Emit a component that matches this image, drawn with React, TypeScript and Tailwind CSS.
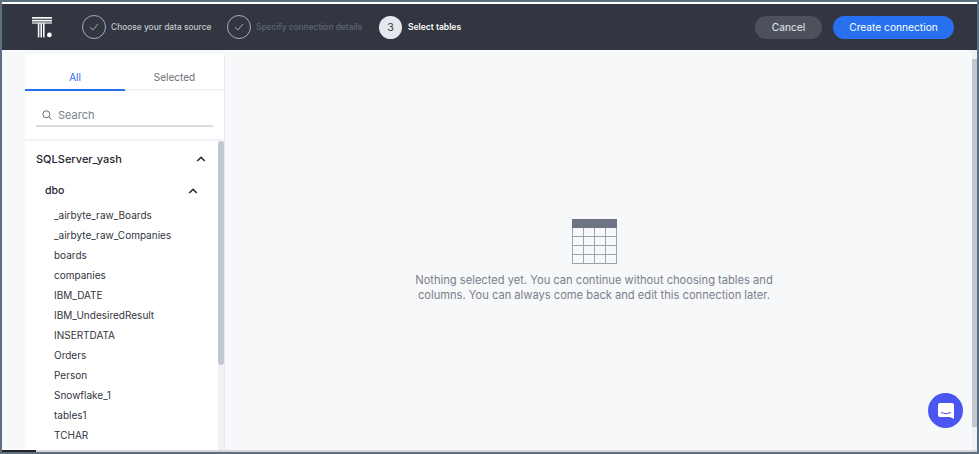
import React from "react";

function Check() {
  return (
    <span className="w-[24px] h-[24px] rounded-full border border-[#a9adb5] flex items-center justify-center shrink-0">
      <svg width="10" height="8" viewBox="0 0 10 8" fill="none" stroke="#a9adb5" strokeWidth="1">
        <path d="M1 4.2 L3.8 7 L9 1" />
      </svg>
    </span>
  );
}

function Chevron() {
  return (
    <svg width="10" height="6" viewBox="0 0 10 6" fill="none" stroke="#2a2f3a" strokeWidth="1.6">
      <path d="M1.2 5 L5 1.4 L8.8 5" />
    </svg>
  );
}

const tables = [
  "_airbyte_raw_Boards",
  "_airbyte_raw_Companies",
  "boards",
  "companies",
  "IBM_DATE",
  "IBM_UndesiredResult",
  "INSERTDATA",
  "Orders",
  "Person",
  "Snowflake_1",
  "tables1",
  "TCHAR",
];

export default function App() {
  return (
    <div className="w-[979px] h-[454px] overflow-hidden bg-[#5d6f80] pt-[2px] px-[2px] font-['Inter','Liberation_Sans',sans-serif] relative">
      <div className="h-[2px] bg-white" />
      <div className="h-[446px] flex flex-col bg-[#f6f8fa]">
        <header className="h-[46px] bg-[#323640] flex items-center shrink-0 pl-[30px] pr-[23px]">
          <svg width="21" height="21" viewBox="0 0 21 21" className="shrink-0 mr-[29px]">
            <rect x="0" y="0" width="20" height="1.7" fill="#f4f5f6" />
            <rect x="0" y="2.8" width="20" height="1.7" fill="#f4f5f6" />
            <rect x="0" y="5.4" width="20" height="1.2" fill="#f4f5f6" />
            <rect x="5.8" y="6" width="1.6" height="14.4" fill="#f4f5f6" />
            <rect x="8.4" y="6" width="1.6" height="14.4" fill="#f4f5f6" />
            <rect x="11" y="6" width="1.6" height="14.4" fill="#f4f5f6" />
            <circle cx="17.4" cy="17.9" r="2.4" fill="#ffffff" />
          </svg>
          <Check />
          <span className="ml-[5px] pt-[1px] text-[8.4px] font-medium text-[#c4c7cc] w-[116px] whitespace-nowrap">Choose your data source</span>
          <Check />
          <span className="ml-[5px] pt-[1px] text-[8.4px] font-medium text-[#5f6675] w-[123px] whitespace-nowrap">Specify connection details</span>
          <span className="w-[23px] h-[23px] pt-[2px] rounded-full bg-[#e6e8ed] text-[#323640] text-[10.5px] flex items-center justify-center shrink-0">3</span>
          <span className="ml-[6px] pt-[1px] text-[8.5px] font-semibold text-white whitespace-nowrap">Select tables</span>
          <button className="ml-auto w-[67px] h-[23px] pt-[2px] rounded-full bg-[#4d515c] text-[#e8e9ec] text-[10.2px] flex items-center justify-center">Cancel</button>
          <button className="ml-[11px] w-[121px] h-[23px] pt-[2px] rounded-full bg-[#2770ef] text-white text-[10.2px] flex items-center justify-center">Create connection</button>
        </header>
        <div className="flex flex-1 min-h-0">
          <aside className="ml-[23px] w-[200px] mt-[4px] flex flex-col bg-[#f1f2f5] border-r border-[#e8eaef] rounded-t-[3px] shrink-0">
            <div className="bg-white rounded-t-[3px] h-[85px] shrink-0 flex flex-col">
              <div className="flex h-[37px] border-b-2 border-[#f1f2f5] shrink-0">
                <div className="w-[100px] h-[37px] pt-[12px] border-b-2 border-[#2770ef] text-[#2770ef] text-[10px] flex items-center justify-center">All</div>
                <div className="flex-1 h-[35px] pt-[12px] text-[#6b6f78] text-[10px] flex items-center justify-center">Selected</div>
              </div>
              <div className="mx-[11px] mt-[12px] h-[24px] pt-[3px] border-b-2 border-[#d9dbe0] flex items-center pl-[6px] gap-[6px]">
                <svg width="10" height="10" viewBox="0 0 10 10" fill="none" stroke="#6b6f78" strokeWidth="1" className="-mt-[1px]">
                  <circle cx="4.3" cy="4.3" r="3.5" />
                  <path d="M6.9 6.9 L9.5 9.5" />
                </svg>
                <span className="text-[11px] text-[#7b7f88]">Search</span>
              </div>
            </div>
            <div className="mt-[2px] flex-1 min-h-0 bg-white flex overflow-hidden">
              <div className="flex-1 min-w-0 pl-[11px] pr-[11px]">
                <div className="h-[34px] mt-[1px] flex items-center justify-between pr-[1px]">
                  <span className="text-[11px] font-medium text-[#1f2430]">SQLServer_yash</span>
                  <Chevron />
                </div>
                <div className="h-[26px] mt-[2px] flex items-center justify-between pl-[9px] pr-[9px]">
                  <span className="text-[10.5px] font-medium text-[#1f2430]">dbo</span>
                  <Chevron />
                </div>
                <ul className="pl-[18px] mt-[1px]">
                  {tables.map((t) => (
                    <li key={t} className="h-[20px] flex items-center text-[10px] text-[#30343e] whitespace-nowrap">{t}</li>
                  ))}
                </ul>
              </div>
              <div className="w-[6px] bg-[#f1f2f5] shrink-0">
                <div className="h-[224px] bg-[#c1c6d0] rounded-[3px]" />
              </div>
            </div>
          </aside>
          <main className="flex-1 min-w-0 flex flex-col items-center pt-[169px] pr-[9px]">
            <svg width="45" height="45" viewBox="0 0 45 45">
              <rect x="0" y="0" width="45" height="45" fill="#9da2b0" />
              <rect x="0" y="0" width="45" height="9" fill="#6e7484" />
              {[0, 1, 2, 3].map((r) =>
                [0, 1, 2, 3].map((c) => (
                  <rect key={`${r}-${c}`} x={1 + c * 11} y={9 + r * 9} width="10" height="8" fill="#f6f8fa" />
                ))
              )}
            </svg>
            <p className="mt-[9px] w-[380px] text-center text-[11.15px] leading-[15px] text-[#7a7f8b]">
              Nothing selected yet. You can continue without choosing tables and columns. You can always come back and edit this connection later.
            </p>
          </main>
          <div className="w-[5px] shrink-0 bg-[#eff1f4]">
            <div className="mt-[9px] h-[368px] bg-[#c1c6d0]" />
          </div>
        </div>
      </div>
      <div className="h-[2px] flex">
        <div className="w-[34px] bg-[#222428]" />
        <div className="flex-1 bg-[#d5d6d8]" />
      </div>
      <button className="absolute left-[928px] top-[393px] w-[35px] h-[35px] rounded-full bg-[#4a55f2] flex items-center justify-center">
        <svg width="16" height="16" viewBox="0 0 16 16">
          <path d="M2 0 H14 A2 2 0 0 1 16 2 V16 L12 14 H2 A2 2 0 0 1 0 12 V2 A2 2 0 0 1 2 0 Z" fill="#ffffff" />
          <path d="M3 9.5 Q8 12 13 9.5" fill="none" stroke="#4a55f2" strokeWidth="1" />
        </svg>
      </button>
    </div>
  );
}
